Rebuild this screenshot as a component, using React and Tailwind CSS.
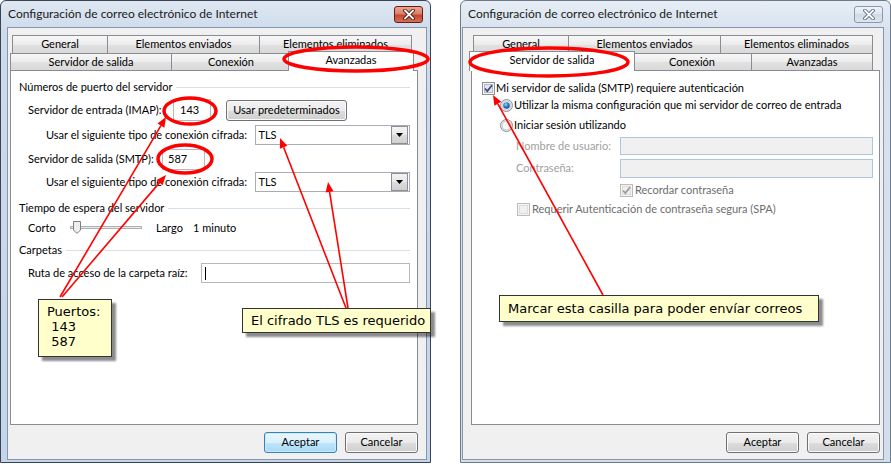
import React from 'react';

const RED = '#ff0000';

const ROW1 = [
  { label: 'General', w: 'w-[96px]' },
  { label: 'Elementos enviados', w: 'w-[153px]' },
  { label: 'Elementos eliminados', w: 'w-[153px]' },
];
const ROW2 = [
  { label: 'Servidor de salida', w: 'w-[162px]', ws: 'w-[166px]' },
  { label: 'Conexión', w: 'w-[120px]', ws: 'w-[124px]' },
  { label: 'Avanzadas', w: 'w-[122px]', ws: 'w-[126px]' },
];

function CloseButton({ active }) {
  return (
    <div
      className={`mr-[7px] flex h-[17px] w-[29px] items-center justify-center rounded-[3px] border ${
        active
          ? 'border-[#6b1d10] bg-[linear-gradient(#eaa795,#d9806a_45%,#c6462d_55%,#d2705a)]'
          : 'border-[#8a98aa] bg-[linear-gradient(#eef3f8,#dce6f0_50%,#cfdbe8_50%,#dbe5ef)]'
      }`}
    >
      <svg width="12" height="11" viewBox="0 0 12 11">
        <path d="M2 1.5 L10 9.5 M10 1.5 L2 9.5" stroke={active ? '#4a1208' : '#5e6b7b'} strokeWidth="3.6" strokeLinecap="square" />
        <path d="M2 1.5 L10 9.5 M10 1.5 L2 9.5" stroke="#ffffff" strokeWidth="1.8" strokeLinecap="square" />
      </svg>
    </div>
  );
}

function Btn({ children, def }) {
  return (
    <div
      className={`flex h-[21px] w-[73px] items-center justify-center rounded-[3px] border ${
        def
          ? 'border-[#3c7fb1] bg-[linear-gradient(#eaf6fd,#d9f0fc_50%,#bee6fd_50%,#a7d9f5)] shadow-[inset_0_0_0_1px_#c9ecfc]'
          : 'border-[#707070] bg-[linear-gradient(#f2f2f2,#ebebeb_50%,#dddddd_50%,#cfcfcf)] shadow-[inset_0_0_0_1px_#fbfbfb]'
      }`}
    >
      {children}
    </div>
  );
}

function Tabs({ selected }) {
  return (
    <div className="flex flex-col">
      <div className="flex h-[18px] pl-[2px]">
        {ROW1.map((t, i) => (
          <div
            key={t.label}
            className={`${t.w} ${i > 0 ? '-ml-px' : ''} flex items-center justify-center whitespace-nowrap border border-b-0 border-[#898c95] bg-[linear-gradient(#f7f7f7,#ececec_50%,#e1e1e1_50%,#d9d9d9)]`}
          >
            {t.label}
          </div>
        ))}
      </div>
      <div className="flex h-[17px]">
        {ROW2.map((t, i) =>
          t.label === selected ? (
            <div
              key={t.label}
              className={`${t.ws} relative z-10 -mx-[2px] -mt-[2px] flex h-[20px] items-center justify-center whitespace-nowrap border border-b-0 border-[#898c95] bg-white pb-[2px] ${i > 0 ? '-ml-[3px]' : ''}`}
            >
              {t.label}
            </div>
          ) : (
            <div
              key={t.label}
              className={`${t.w} ${i > 0 ? '-ml-px' : ''} flex items-center justify-center whitespace-nowrap border border-b-0 border-[#898c95] bg-[linear-gradient(#f7f7f7,#ececec_50%,#e1e1e1_50%,#d9d9d9)]`}
            >
              {t.label}
            </div>
          )
        )}
      </div>
    </div>
  );
}

function Window({ title, active, clientClass, bodyClass, selected, children }) {
  return (
    <div
      className={`flex h-[463px] w-[431px] shrink-0 flex-col rounded-t-[6px] border ${
        active
          ? 'border-[#384456] bg-[linear-gradient(#dfe8f2,#cddbeb_30px,#c4d5e9)]'
          : 'border-[#6f7b8b] bg-[linear-gradient(#e6edf5,#d8e2ee_30px,#d2deeb)]'
      }`}
    >
      <div className="flex h-[26px] shrink-0 items-center pl-[7px]">
        <span className="whitespace-nowrap text-[12px] text-[#1b1b1b]">{title}</span>
        <div className="ml-auto">
          <CloseButton active={active} />
        </div>
      </div>
      <div className={`flex flex-1 flex-col border border-[#8596ad] bg-[#f0f0f0] pt-[7px] ${clientClass}`}>
        <div className={bodyClass}>
          <Tabs selected={selected} />
          <div className="h-[355px] border border-[#898c95] bg-white">{children}</div>
          <div className="mt-[7px] flex justify-end gap-[8px]">
            <Btn def={active}>Aceptar</Btn>
            <Btn>Cancelar</Btn>
          </div>
        </div>
      </div>
    </div>
  );
}

function Group({ title, className }) {
  return (
    <div className={`flex h-[16px] items-center ${className}`}>
      <span className="whitespace-nowrap">{title}</span>
      <div className="ml-[4px] flex-1 border-t border-[#d5dfe5]" />
    </div>
  );
}

function Combo() {
  return (
    <div className="flex h-[20px] w-[155px] items-center border border-[#a9acb4] bg-white pl-[2px]">
      <span className="flex-1">TLS</span>
      <div className="mr-px flex h-[18px] w-[17px] items-center justify-center border border-[#8d8f94] bg-[linear-gradient(#f3f3f3,#e8e8e8_50%,#dcdcdc_50%,#d0d0d0)]">
        <svg width="7" height="4" viewBox="0 0 7 4">
          <path d="M0 0 H7 L3.5 4 Z" fill="#000" />
        </svg>
      </div>
    </div>
  );
}

function CheckBox({ checked, disabled }) {
  return (
    <svg width="13" height="13" viewBox="0 0 13 13" className="shrink-0">
      <rect x="0.5" y="0.5" width="12" height="12" fill={disabled ? '#f4f4f4' : '#f6f6f6'} stroke={disabled ? '#bcbcbc' : '#8e8f8f'} />
      <rect x="2.5" y="2.5" width="8" height="8" fill={disabled ? '#f0f0f0' : '#e4e7ea'} stroke={disabled ? '#dcdcdc' : '#b4b9be'} />
      {checked && (
        <path d="M3 6.5 L5.3 9 L10 3.2" fill="none" stroke={disabled ? '#9c9c9c' : '#3a4e8c'} strokeWidth="1.8" />
      )}
    </svg>
  );
}

function Radio({ on }) {
  return (
    <svg width="13" height="13" viewBox="0 0 13 13" className="shrink-0">
      <defs>
        <radialGradient id="rd" cx="0.4" cy="0.35" r="0.7">
          <stop offset="0" stopColor="#9fd4f7" />
          <stop offset="0.5" stopColor="#2f7fc6" />
          <stop offset="1" stopColor="#123f75" />
        </radialGradient>
      </defs>
      <circle cx="6.5" cy="6.5" r="6" fill="#eceef0" stroke="#8e8f8f" />
      <circle cx="6.5" cy="6.5" r="4.5" fill="#f7f7f7" stroke="#c2c6cb" />
      {on && <circle cx="6.5" cy="6.5" r="3.3" fill="url(#rd)" />}
    </svg>
  );
}

function Advanced() {
  return (
    <div className="whitespace-nowrap pl-[8px] pr-[7px] pt-[8px]">
      <Group title="Números de puerto del servidor" />
      <div className="mt-[4px] flex h-[22px] items-center pl-[9px]">
        <span className="w-[145px]">Servidor de entrada (IMAP):</span>
        <div className="flex h-[22px] w-[38px] items-center border border-[#b5b8c0] bg-white pl-[6px]">143</div>
        <div className="ml-[15px]">
          <div className="flex h-[21px] w-[121px] items-center justify-center rounded-[3px] border border-[#707070] bg-[linear-gradient(#f2f2f2,#ebebeb_50%,#dddddd_50%,#cfcfcf)] shadow-[inset_0_0_0_1px_#fbfbfb]">
            Usar predeterminados
          </div>
        </div>
      </div>
      <div className="mt-[4px] flex h-[20px] items-center pl-[27px]">
        <span className="w-[210px]">Usar el siguiente tipo de conexión cifrada:</span>
        <Combo />
      </div>
      <div className="mt-[4px] flex h-[21px] items-center pl-[9px]">
        <span className="w-[134px]">Servidor de salida (SMTP):</span>
        <div className="flex h-[21px] w-[43px] items-center border border-[#b5b8c0] bg-white pl-[5px]">587</div>
      </div>
      <div className="mt-[2px] flex h-[20px] items-center pl-[27px]">
        <span className="w-[210px]">Usar el siguiente tipo de conexión cifrada:</span>
        <Combo />
      </div>
      <Group title="Tiempo de espera del servidor" className="mt-[8px]" />
      <div className="mt-[4px] flex h-[16px] items-center pl-[9px]">
        <span className="w-[42px]">Corto</span>
        <div className="relative h-[14px] w-[72px]">
          <div className="absolute left-0 right-0 top-[5px] h-[3px] border border-[#b0b0b0] bg-[#e7eaea]" />
          <svg width="8" height="13" viewBox="0 0 8 13" className="absolute left-[3px] top-0">
            <path d="M0.5 0.5 H7.5 V9 L4 12.5 L0.5 9 Z" fill="#eeeeee" stroke="#7f7f7f" />
          </svg>
        </div>
        <span className="ml-[14px] w-[37px]">Largo</span>
        <span>1 minuto</span>
      </div>
      <Group title="Carpetas" className="mt-[6px]" />
      <div className="mt-[5px] flex h-[20px] items-center pl-[9px]">
        <span className="w-[173px]">Ruta de acceso de la carpeta raíz:</span>
        <div className="flex h-[20px] flex-1 items-center border border-[#b5b8c0] bg-white pl-[3px]">
          <div className="h-[13px] w-px bg-black" />
        </div>
      </div>
    </div>
  );
}

function Outgoing() {
  return (
    <div className="whitespace-nowrap pl-[10px] pr-[6px] pt-[9px]">
      <div className="flex h-[16px] items-center">
        <CheckBox checked />
        <span className="ml-[1px]">Mi servidor de salida (SMTP) requiere autenticación</span>
      </div>
      <div className="mt-[1px] flex h-[16px] items-center pl-[18px]">
        <Radio on />
        <span className="ml-[1px]">Utilizar la misma configuración que mi servidor de correo de entrada</span>
      </div>
      <div className="mt-[4px] flex h-[16px] items-center pl-[18px]">
        <Radio />
        <span className="ml-[1px]">Iniciar sesión utilizando</span>
      </div>
      <div className="mt-[4px] flex h-[18px] items-center pl-[34px]">
        <span className="w-[104px] text-[#a0a0a0]">Nombre de usuario:</span>
        <div className="h-[18px] flex-1 border border-[#afc4dd] bg-[#f0f0f0]" />
      </div>
      <div className="mt-[4px] flex h-[19px] items-center pl-[34px]">
        <span className="w-[104px] text-[#a0a0a0]">Contraseña:</span>
        <div className="h-[19px] flex-1 border border-[#afc4dd] bg-[#f0f0f0]" />
      </div>
      <div className="mt-[4px] flex h-[16px] items-center pl-[138px]">
        <CheckBox checked disabled />
        <span className="ml-[2px] text-[#6d6d6d]">Recordar contraseña</span>
      </div>
      <div className="mt-[3px] flex h-[16px] items-center pl-[35px]">
        <CheckBox disabled />
        <span className="ml-[2px] text-[#6d6d6d]">Requerir Autenticación de contraseña segura (SPA)</span>
      </div>
    </div>
  );
}

function Arrow({ x1, y1, x2, y2 }) {
  const a = Math.atan2(y2 - y1, x2 - x1);
  const len = 10;
  const half = 4;
  const bx = x2 - len * Math.cos(a);
  const by = y2 - len * Math.sin(a);
  const px = -Math.sin(a) * half;
  const py = Math.cos(a) * half;
  return (
    <g>
      <line x1={x1} y1={y1} x2={bx} y2={by} stroke={RED} strokeWidth="1.6" />
      <polygon points={`${x2},${y2} ${bx + px},${by + py} ${bx - px},${by - py}`} fill={RED} />
    </g>
  );
}

function Note({ className, children }) {
  return (
    <div
      className={`absolute z-30 border border-[#333333] bg-[#ffffcc] pl-[8px] text-[13px] text-black shadow-[4px_4px_2px_rgba(0,0,0,0.45)] [font-family:'DejaVu_Sans',sans-serif] ${className}`}
    >
      {children}
    </div>
  );
}

export default function App() {
  return (
    <div className="relative flex h-[464px] w-[891px] gap-[29px] overflow-hidden bg-white text-[11px] text-black [font-family:Lato,sans-serif]">
      <Window
        title="Configuración de correo electrónico de Internet"
        active
        selected="Avanzadas"
        clientClass="ml-[6px] mr-[3px] mb-[2px]"
        bodyClass="pl-[2px] pr-[8px]"
      >
        <Advanced />
      </Window>
      <Window
        title="Configuración de correo electrónico de Internet"
        selected="Servidor de salida"
        clientClass="ml-[1px] mr-[6px] mb-[2px]"
        bodyClass="pl-[8px] pr-[3px]"
      >
        <Outgoing />
      </Window>

      <svg className="pointer-events-none absolute left-0 top-0 z-20" width="891" height="464">
        <g fill="none" stroke={RED} strokeWidth="3.5">
          <ellipse cx="190" cy="111" rx="26" ry="13" />
          <ellipse cx="185" cy="159" rx="27" ry="14" />
          <ellipse cx="356" cy="59" rx="72" ry="12" />
          <ellipse cx="549" cy="62" rx="79" ry="14" />
        </g>
        <Arrow x1={60} y1={297} x2={166} y2={117} />
        <Arrow x1={62} y1={297} x2={166} y2={175} />
        <Arrow x1={346} y1={308} x2={280} y2={138} />
        <Arrow x1={348} y1={308} x2={328} y2={182} />
        <Arrow x1={603} y1={295} x2={493} y2={95} />
      </svg>

      <Note className="left-[38px] top-[299px] h-[58px] w-[74px] whitespace-pre pt-[4px] leading-[15px]">
        {'Puertos:\n 143\n 587'}
      </Note>
      <Note className="left-[242px] top-[308px] flex h-[25px] w-[189px] items-center whitespace-nowrap">El cifrado TLS es requerido</Note>
      <Note className="left-[499px] top-[295px] flex h-[27px] w-[320px] items-center whitespace-nowrap">
        Marcar esta casilla para poder envíar correos
      </Note>
    </div>
  );
}
